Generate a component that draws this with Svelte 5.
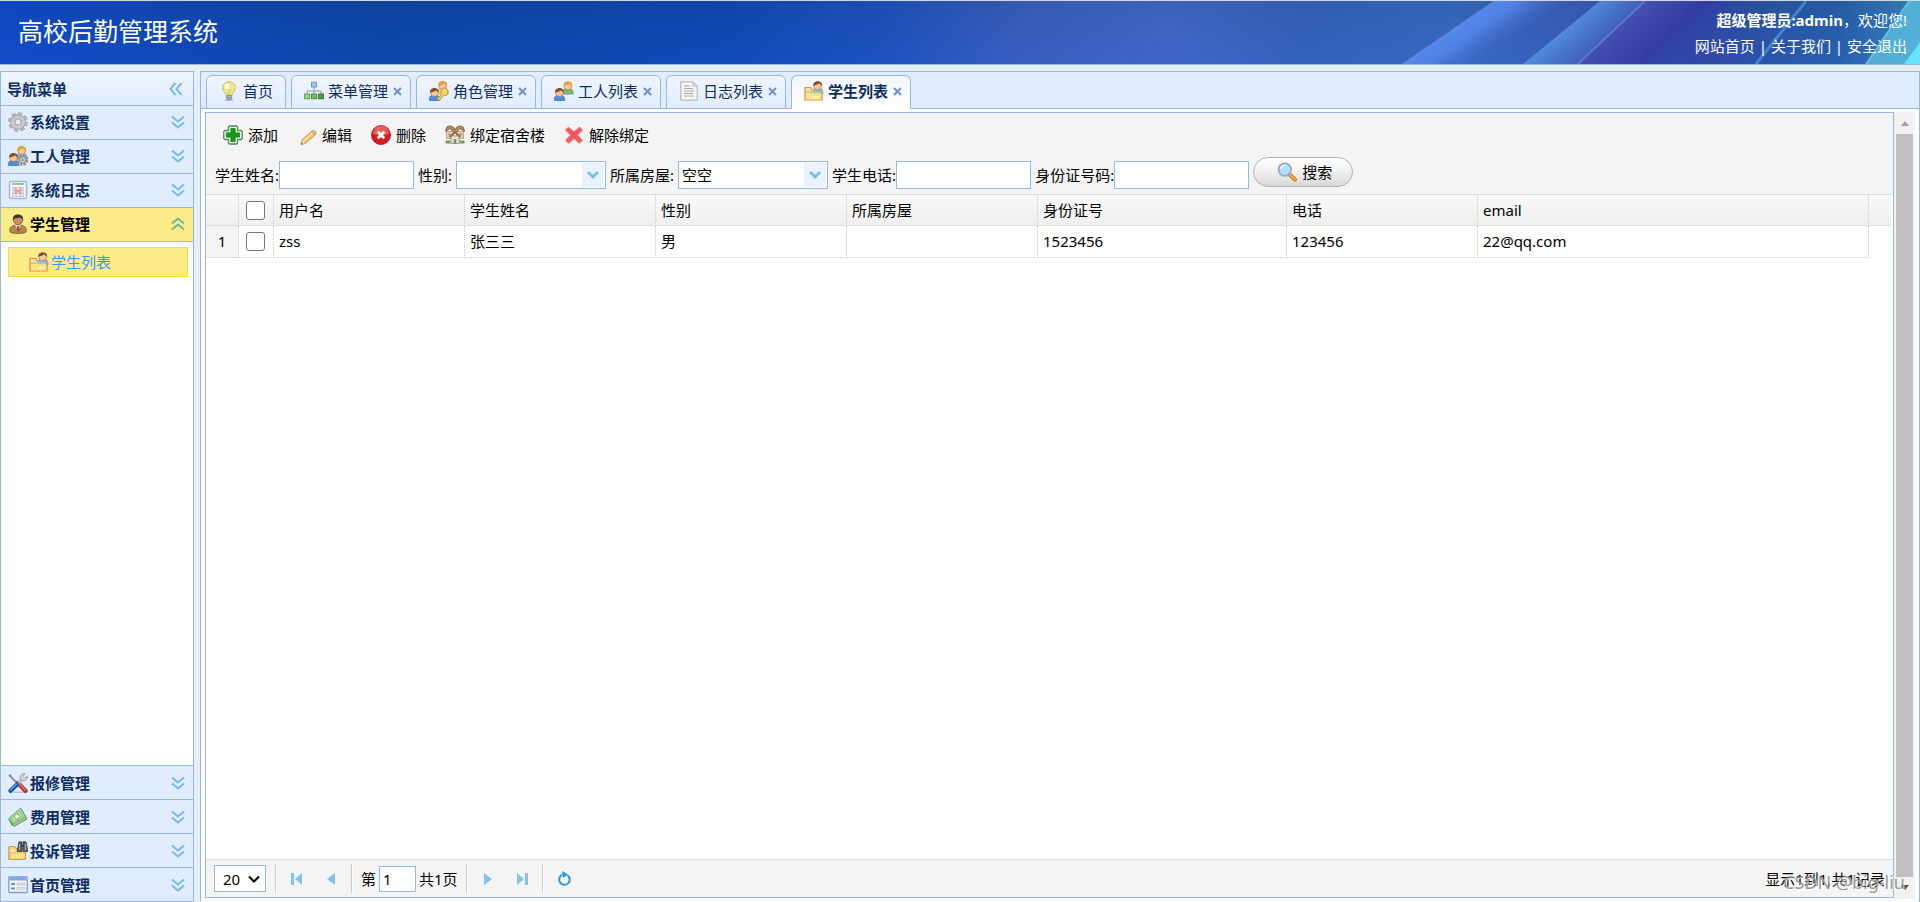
<script lang="ts">
	type MenuItem = { title: string; icon: string };

	const menuTop: MenuItem[] = [
		{ title: '系统设置', icon: 'gear' },
		{ title: '工人管理', icon: 'worker' },
		{ title: '系统日志', icon: 'log' },
		{ title: '学生管理', icon: 'student' }
	];
	const menuBottom: MenuItem[] = [
		{ title: '报修管理', icon: 'tools' },
		{ title: '费用管理', icon: 'money' },
		{ title: '投诉管理', icon: 'search-folder' },
		{ title: '首页管理', icon: 'form' }
	];
	const tabs = [
		{ title: '首页', icon: 'bulb', closable: false },
		{ title: '菜单管理', icon: 'tree', closable: true },
		{ title: '角色管理', icon: 'role', closable: true },
		{ title: '工人列表', icon: 'users', closable: true },
		{ title: '日志列表', icon: 'page', closable: true },
		{ title: '学生列表', icon: 'user-folder', closable: true }
	];
	const tools = [
		{ title: '添加', icon: 'add' },
		{ title: '编辑', icon: 'pencil' },
		{ title: '删除', icon: 'delete' },
		{ title: '绑定宿舍楼', icon: 'house' },
		{ title: '解除绑定', icon: 'cross' }
	];
	const rows = [
		{ username: 'zss', name: '张三三', sex: '男', house: '', card: '1523456', phone: '123456', email: '22@qq.com' }
	];

	let openMenu = $state('学生管理');
	let activeTab = $state('学生列表');
	let checked = $state(rows.map(() => false));
	let house = $state('空空');
	let sex = $state('');
	let page = $state('1');

	function checkAll(e: Event) {
		const on = (e.currentTarget as HTMLInputElement).checked;
		checked = rows.map(() => on);
	}
</script>

{#snippet person(x: number, y: number, hair: string, shirt: string)}
	<g transform="translate({x} {y})">
		<path d="M-.3 12.600c0-4.500 2-5.600 5.500-5.600s5.500 1.100 5.500 5.600c-2 .6-9 .6-11 0z" fill={shirt} stroke="#00000044" stroke-width=".6" />
		<circle cx="5.200" cy="4.600" r="3.900" fill="#f5c79a" stroke="#9a6432" stroke-width=".5" />
		<path d="M.8 4.800C.5 1.500 2.700 0 5.200 0s4.700 1.500 4.400 4.800C8.300 3.800 7.500 3 6.800 2.400 5.200 3.600 3 3.600.8 4.800z" fill={hair} />
	</g>
{/snippet}

{#snippet icon(name: string)}
	<svg class="icon" viewBox="0 0 20 20" aria-hidden="true">
		{#if name === 'gear'}
			<circle cx="10" cy="10" r="8" fill="none" stroke="#8e8e8e" stroke-width="3.600" stroke-dasharray="3.600 2.680" />
			<circle cx="10" cy="10" r="8" fill="none" stroke="#c4c4c4" stroke-width="2.400" stroke-dasharray="3 3.280" stroke-dashoffset="-.3" />
			<circle cx="10" cy="10" r="5.400" fill="none" stroke="#959595" stroke-width="4.800" />
			<circle cx="10" cy="10" r="5.200" fill="none" stroke="#c9c9c9" stroke-width="3.800" />
			<circle cx="10" cy="10" r="3" fill="#e6eaf0" stroke="#999" stroke-width=".7" />
		{:else if name === 'worker'}
			{@render person(8.500, 0, '#e3a32e', '#9cb6cf')}
			{@render person(.3, 7, '#8a5028', '#4c8fe0')}
			<circle cx="14.500" cy="14" r="4" fill="none" stroke="#8a8f8a" stroke-width="3.500" stroke-dasharray="2.200 .94" />
			<circle cx="14.500" cy="14" r="3" fill="#d9dcd6" stroke="#8c918a" stroke-width="1" />
			<circle cx="14.500" cy="14" r="1.200" fill="#7f8a80" />
		{:else if name === 'log'}
			<rect x="1.500" y="1.500" width="17" height="17" rx="1.500" fill="#f4f8fd" stroke="#9db9df" stroke-width="1.500" />
			<path d="M4 4h12" stroke="#79b66b" stroke-width="1.500" />
			<path d="M4 7.500h12M4 10.500h12M4 13.500h12M4 16.300h12M5 7v10M8.300 7v10M11.700 7v10M15 7v10" stroke="#b7c3d8" stroke-width=".9" />
			<path d="M6.500 7.500h2v2h3v-2h2v7h-2v-2h-3v2h-2z" fill="#f29a9a" />
		{:else if name === 'student'}
			<path d="M2 18c-1-5 2-7 8-7s9 2 8 7c-3 2-13 2-16 0z" fill="#b08a4a" stroke="#74572c" stroke-width=".8" />
			<path d="M7 11h6l-3 6z" fill="#e9dcc0" />
			<path d="M9.200 12h1.800l1 4-1.600 2-1.600-2z" fill="#b8454b" />
			<circle cx="10" cy="6" r="4.600" fill="#c98f62" stroke="#5e3a22" stroke-width=".6" />
			<path d="M4.800 6.500C4.500 2 7 .5 10 .5S15.500 2 15.200 6.500C14.200 5 13.500 4 12 3.600 9.500 4.500 6 4 4.800 6.500z" fill="#3c322e" />
		{:else if name === 'tools'}
			<path d="M5 19.200h13" stroke="#9fb2cc" stroke-width="1" />
			<path d="M1 2l7.500 7.500" stroke="#8f959c" stroke-width="2" />
			<path d="M.8.800l2.800 1.600-1 1.400z" fill="#777" />
			<path d="M10 10l7.500 8" stroke="#b83233" stroke-width="4.400" stroke-linecap="round" />
			<path d="M10.500 10l6.500 7" stroke="#e8706a" stroke-width="1.500" stroke-linecap="round" />
			<path d="M14 6.500L9.500 11" stroke="#b6bcc4" stroke-width="3" />
			<path d="M12 5.200c0-3 2-5 5-4.500l-2.200 2.600 1.800 1.900 2.700-2c.5 3-1.600 5-4.300 4.600z" fill="#d6dade" stroke="#8d949c" stroke-width=".8" />
			<path d="M9 11.500L2.600 17.800" stroke="#1d57b4" stroke-width="4.400" stroke-linecap="round" />
			<path d="M8.400 11.200l-5.500 5.300" stroke="#5e9cf0" stroke-width="1.400" stroke-linecap="round" />
		{:else if name === 'money'}
			<path d="M1 12L13 1.500l6 10.500L6 19.500z" fill="#9fca8e" stroke="#5e9b57" stroke-width="1" />
			<path d="M1 12l3.500 6.500" stroke="#4c8c49" stroke-width="1.400" />
			<path d="M.8 11.200L12.500 1l5 9L5 17.300z" fill="#b7dba6" stroke="#66a460" stroke-width=".8" />
			<path d="M3 11.500l9-7.800 3.300 6-9.600 5.500z" fill="none" stroke="#7db873" stroke-width=".8" />
			<circle cx="9" cy="9.500" r="2.600" fill="#e3f2d9" stroke="#66a460" stroke-width=".7" />
		{:else if name === 'search-folder'}
			<path d="M.8 18.500V5.500h6l1.500 2h9.200v11z" fill="#f7d277" stroke="#cf9332" />
			<path d="M2.500 9.500h4" stroke="#fff" stroke-width="1.500" />
			<path d="M3 12h14v6H2z" fill="#fbe38f" stroke="#e5b14e" stroke-width=".7" />
			<path d="M9 10.500L11 .8h3v9.700H9zM20 10.500L18 .8h-3v9.700h5z" fill="#5b5f65" stroke="#2f3237" stroke-width=".7" />
			<path d="M11.500 3v6M17.500 3v6" stroke="#adb3ba" stroke-width="1" />
			<path d="M13 5h3" stroke="#2f3237" stroke-width="1.500" />
		{:else if name === 'form'}
			<rect x=".8" y="2" width="18.400" height="15.500" rx="1" fill="#f3f7fc" stroke="#7f9cc7" stroke-width="1.300" />
			<path d="M1.500 2.500h17v3h-17z" fill="#7ea8e4" />
			<path d="M3 9h4M3 13.500h4" stroke="#5f8fd8" stroke-width="1.800" />
			<path d="M9 8h8v2.200H9zM9 12.500h8v2.200H9z" fill="#dfe3e8" stroke="#b3bac4" stroke-width=".6" />
		{:else if name === 'bulb'}
			<path d="M10 .8c4 0 6.300 2.800 6.300 5.900 0 3.500-3.200 4.800-3.500 8H7.200c-.3-3.200-3.500-4.500-3.500-8C3.700 3.600 6 .8 10 .8z" fill="#efe98a" stroke="#b9b460" stroke-width=".9" />
			<ellipse cx="8" cy="5.500" rx="2.300" ry="3" fill="#fdfde2" />
			<path d="M9 8l.5 6M11.500 8l-.6 6" stroke="#c9bd4e" stroke-width=".7" />
			<rect x="7.300" y="14.500" width="5.400" height="4" rx=".8" fill="#b5b8ba" stroke="#7e8388" stroke-width=".7" />
			<path d="M7.500 16.500h5" stroke="#71767b" stroke-width=".7" />
			<ellipse cx="10" cy="19.200" rx="5" ry=".7" fill="#00000033" />
		{:else if name === 'tree'}
			<path d="M10 6v4M3 13v-3h14v3M10 10v3" fill="none" stroke="#8e979f" stroke-width="1" />
			<rect x="7.500" y="1.300" width="5" height="4.700" fill="#9fc5f3" stroke="#6a97d3" />
			<rect x=".6" y="13" width="5" height="4.700" fill="#9bd184" stroke="#5c9e4b" />
			<rect x="7.500" y="13" width="5" height="4.700" fill="#74bd5e" stroke="#468f38" />
			<rect x="14.400" y="13" width="5" height="4.700" fill="#4f9d45" stroke="#2f7a2a" />
		{:else if name === 'role'}
			{@render person(8.500, 0, '#e3a32e', '#f2d58d')}
			{@render person(.3, 7, '#8a5028', '#4c8fe0')}
			<path d="M19 11a3.600 3.600 0 0 1-4.800 3.600L10.500 19l-2 .4.200-2.200 4-4.200A3.600 3.600 0 1 1 19 11z" fill="#f7d36c" stroke="#c08a2c" stroke-width=".9" />
		{:else if name === 'users'}
			{@render person(8.700, .3, '#e3a32e', '#78b96c')}
			{@render person(.3, 7, '#8a5028', '#4c8fe0')}
		{:else if name === 'page'}
			<path d="M1.800.800h12l4.400 4.400v14H1.800z" fill="#f6f6f6" stroke="#b9b9b9" stroke-width="1.200" />
			<path d="M13.800.800v4.400h4.400z" fill="#d8d8d8" stroke="#b9b9b9" stroke-width=".7" />
			<path d="M5 5h6M5 7.500h9M5 10h10M5 12.500h9M5 15h10" stroke="#a9a9a9" stroke-width="1.100" />
		{:else if name === 'user-folder'}
			{@render person(8.500, .2, '#8a4b22', '#8db4e8')}
			<path d="M1 19V6.500h6L8 9h10v10z" fill="#f9e3a0" stroke="#d9903b" stroke-width="1.200" />
			<path d="M9 9.300c1-1.500 8-1.500 9.800 1.500l-1 1.700H9z" fill="#8db4e8" />
			<path d="M2 10.500h14v1.500H2z" fill="#a9cfa3" />
			<path d="M2 12.500h15v5.900H2z" fill="#fbe582" />
			<path d="M9 15l7 .5-6 1.500z" fill="#fff6c9" />
		{:else if name === 'add'}
			<path d="M6.500 1h7l1 1v3.500h3.500l1.200 1v7l-1.200 1h-3.500v3.500l-1 1h-7l-1-1v-3.500H2l-1.200-1v-7L2 5.500h3.500V2z" fill="#f6fbf5" stroke="#4d8a55" stroke-width="1.300" />
			<path d="M7.800 3.300h4.400v4.500h4.500v4.400h-4.500v4.500H7.800v-4.500H3.300V7.800h4.500z" fill="#119a17" stroke="#0b7a10" stroke-width=".6" />
		{:else if name === 'pencil'}
			<path d="M4 19.400l1-4.600L14.800 6.200l3.600 3.300L8.600 18.300z" fill="#f5c66b" stroke="#c58a33" stroke-width=".9" />
			<path d="M6.500 16L16 7.800" stroke="#fde6ae" stroke-width="1.500" />
			<path d="M14.500 6.500l1.500-1c1.600-.6 3.600 1.200 3.200 2.800l-1.200 1.500z" fill="#f0b39a" stroke="#b98268" stroke-width=".6" />
			<path d="M4 19.400l1-4.600 3.600 3.500z" fill="#e9cfa0" />
			<path d="M4 19.400l.4-2 1.500 1.500z" fill="#444" />
		{:else if name === 'delete'}
			<circle cx="10" cy="10" r="9.500" fill="#d81a22" stroke="#a80f18" stroke-width=".8" />
			<path d="M2 8.500a8 8 0 0 1 16 0c-4 2.500-12 2.500-16 0z" fill="#f0716f" opacity=".75" />
			<path d="M6.800 6.800l6.400 6.400M13.200 6.800l-6.400 6.400" stroke="#fff" stroke-width="2.800" />
		{:else if name === 'house'}
			<path d="M1.500 6.500h7v7h-7z" fill="#e8d3ae" stroke="#8f7a5a" stroke-width=".6" />
			<path d="M11.500 6.500h7v7h-7z" fill="#e8d3ae" stroke="#8f7a5a" stroke-width=".6" />
			<path d="M.3 6.500L2 1.800 5 .8l3.500 1.500L10 5l1.500-2.700L15 .8l3 1 1.700 4.700-4.700-3-5 5-5-5z" fill="#b98a58" stroke="#76573a" stroke-width=".8" />
			<path d="M6 11h8v7.500H6z" fill="#f0e3c8" stroke="#8f7a5a" stroke-width=".7" />
			<path d="M4.500 12L10 7l5.500 5" fill="none" stroke="#9a6b42" stroke-width="1.800" />
			<path d="M8.700 14h2.600v4.500H8.700z" fill="#6e8aa8" />
			<path d="M3.500 8.500h2v2h-2zM14.500 8.500h2v2h-2z" fill="#6e8aa8" />
			<path d="M.5 15.500h5v3h-5zM14.500 15.500h5v3h-5z" fill="#6f9f5c" />
		{:else if name === 'cross'}
			<path d="M4.500 2.500L10 7l5.500-4.500 2.700 2.500L13.200 10l5 5.300-2.800 2.700L10 13.200 4.600 18l-2.800-2.700L6.800 10l-5-5z" fill="#f4555a" stroke="#f4716f" stroke-width="1.200" stroke-linejoin="round" />
		{:else if name === 'search'}
			<path d="M12 12l6 5.500" stroke="#c8791d" stroke-width="4" stroke-linecap="round" />
			<path d="M12 12l5.600 5" stroke="#f4ae4b" stroke-width="2.200" stroke-linecap="round" />
			<circle cx="7.800" cy="7.600" r="6.300" fill="#b5dbfa" stroke="#96a6bd" stroke-width="1.700" />
			<path d="M4 7a4 4 0 0 1 5-3.600" fill="none" stroke="#eff8ff" stroke-width="1.600" />
		{/if}
	</svg>
{/snippet}

{#snippet chevrons(up: boolean)}
	<svg class="chevrons" class:up viewBox="0 0 14 14" aria-hidden="true">
		<path d="M1 1.500l6 5 6-5M1 7.500l6 5 6-5" />
	</svg>
{/snippet}

{#snippet menuHead(item: MenuItem)}
	<button class="menu-head" class:open={openMenu === item.title} onclick={() => (openMenu = item.title)}>
		{@render icon(item.icon)}
		<span>{item.title}</span>
		{@render chevrons(openMenu === item.title)}
	</button>
{/snippet}

{#snippet pageIcon(d: string)}
	<svg class="page-icon" viewBox="0 0 16 16" aria-hidden="true"><path {d} /></svg>
{/snippet}

<div class="app">
	<header>
		<svg class="banner" viewBox="0 0 1920 64" preserveAspectRatio="none" aria-hidden="true">
			<defs>
				<linearGradient id="sky">
					<stop offset="0" stop-color="#124ac6" />
					<stop offset=".1" stop-color="#1248b2" />
					<stop offset=".2" stop-color="#1046a4" />
					<stop offset=".38" stop-color="#1249b2" />
					<stop offset=".46" stop-color="#1f52ba" />
					<stop offset=".53" stop-color="#3b5fba" />
					<stop offset=".61" stop-color="#4469c4" />
					<stop offset=".68" stop-color="#3763b6" />
					<stop offset=".76" stop-color="#386bbd" />
					<stop offset=".83" stop-color="#3c5cb4" />
					<stop offset=".88" stop-color="#3643a4" />
					<stop offset=".91" stop-color="#2d52a4" />
					<stop offset=".96" stop-color="#2a62aa" />
					<stop offset="1" stop-color="#3d86bf" />
				</linearGradient>
				<linearGradient id="beam" gradientUnits="userSpaceOnUse" x1="1449" y1="32" x2="1475" y2="69">
					<stop offset="0" stop-color="#5289ea" />
					<stop offset=".35" stop-color="#4e80e2" />
					<stop offset="1" stop-color="#4461bd" stop-opacity="0" />
				</linearGradient>
				<linearGradient id="beam2" gradientUnits="userSpaceOnUse" x1="1562" y1="32" x2="1584" y2="58">
					<stop offset="0" stop-color="#5a96e2" />
					<stop offset=".4" stop-color="#4c7fd2" />
					<stop offset="1" stop-color="#4565bd" stop-opacity=".8" />
				</linearGradient>
				<linearGradient id="purple" gradientUnits="userSpaceOnUse" x1="1611" y1="32" x2="1668" y2="92">
					<stop offset="0" stop-color="#4650b2" />
					<stop offset=".5" stop-color="#323ca2" />
					<stop offset="1" stop-color="#2a50a4" stop-opacity="0" />
				</linearGradient>
				<linearGradient id="shade" x2="0" y2="1">
					<stop offset="0" stop-color="#003060" stop-opacity=".12" />
					<stop offset="1" stop-color="#1050ff" stop-opacity=".08" />
				</linearGradient>
			</defs>
			<path d="M0 0h1920v64H0z" fill="url(#sky)" />
			<path d="M0 0h1920v64H0z" fill="url(#shade)" />
			<path d="M1495 0h100l-92 64h-100z" fill="url(#beam)" />
			<path d="M1645 0h130l-67 64h-130z" fill="url(#purple)" />
			<path d="M1600 0h45l-67 64h-55z" fill="url(#beam2)" opacity=".8" />
			<path d="M1495 0l-92 64M1645 0l-67 64" stroke="#7488dc" stroke-width="2" opacity=".6" />
			<path d="M1806 0l-50 64" stroke="#5aa4e0" stroke-width="3" opacity=".6" />
			<path d="M1909 0h11v64h-54z" fill="#5fc2e0" opacity=".75" />
			<path d="M1909 0l-43 64" stroke="#7fd6f2" stroke-width="2" opacity=".6" />
			<path d="M1920 42v22h-16z" fill="#66e4fb" />
		</svg>
		<h1>高校后勤管理系统</h1>
		<div class="user">
			<p><strong>超级管理员:admin</strong>，欢迎您!</p>
			<nav><a href="#home">网站首页</a> | <a href="#about">关于我们</a> | <a href="#exit">安全退出</a></nav>
		</div>
	</header>

	<div class="body">
		<aside>
			<div class="aside-title">
				<span>导航菜单</span>
				<button aria-label="折叠">
					<svg class="chevrons left" viewBox="0 0 14 14" aria-hidden="true">
						<path d="M1 1.500l6 5 6-5M1 7.500l6 5 6-5" />
					</svg>
				</button>
			</div>
			{#each menuTop as item}
				{@render menuHead(item)}
			{/each}
			<div class="menu-body">
				<a class="leaf" href="#students">{@render icon('user-folder')}<span>学生列表</span></a>
			</div>
			{#each menuBottom as item}
				{@render menuHead(item)}
			{/each}
		</aside>

		<main>
			<div class="tabs">
				{#each tabs as tab}
					<div class="tab" class:active={tab.title === activeTab} class:fixed={!tab.closable}>
						<button class="tab-link" onclick={() => (activeTab = tab.title)}>
							{@render icon(tab.icon)}<span>{tab.title}</span>
						</button>
						{#if tab.closable}
							<button class="close" aria-label="关闭">
								<svg viewBox="0 0 9 9" aria-hidden="true"><path d="M1 1l7 7M8 1L1 8" /></svg>
							</button>
						{/if}
					</div>
				{/each}
			</div>

			<div class="content">
				<section class="grid">
					<div class="toolbar">
						<div class="tools">
							{#each tools as tool}
								<button>{@render icon(tool.icon)}<span>{tool.title}</span></button>
							{/each}
						</div>
						<form class="search" onsubmit={(e) => e.preventDefault()}>
							<div class="field">
								<label for="s-name">学生姓名:</label>
								<input id="s-name" type="text" />
							</div>
							<div class="field">
								<label for="s-sex">性别:</label>
								<div class="combo">
									<select id="s-sex" bind:value={sex}>
										<option value=""></option>
										<option value="男">男</option>
										<option value="女">女</option>
									</select>
									<svg viewBox="0 0 22 24" aria-hidden="true"><path d="M6 9l5 5 5-5" /></svg>
								</div>
							</div>
							<div class="field">
								<label for="s-house">所属房屋:</label>
								<div class="combo">
									<select id="s-house" bind:value={house}>
										<option value="空空">空空</option>
									</select>
									<svg viewBox="0 0 22 24" aria-hidden="true"><path d="M6 9l5 5 5-5" /></svg>
								</div>
							</div>
							<div class="field">
								<label for="s-phone">学生电话:</label>
								<input id="s-phone" type="text" />
							</div>
							<div class="field">
								<label for="s-card">身份证号码:</label>
								<input id="s-card" type="text" />
							</div>
							<button class="search-btn">{@render icon('search')}<span>搜索</span></button>
						</form>
					</div>

					<div class="table-wrap">
						<table>
							<colgroup>
								<col class="c-num" />
								<col class="c-check" />
								<col class="c-base" />
								<col class="c-base" />
								<col class="c-base" />
								<col class="c-base" />
								<col class="c-card" />
								<col class="c-base" />
								<col />
								<col class="c-gap" />
							</colgroup>
							<thead>
								<tr>
									<th></th>
									<th class="check"><input type="checkbox" aria-label="全选" onchange={checkAll} /></th>
									<th>用户名</th>
									<th>学生姓名</th>
									<th>性别</th>
									<th>所属房屋</th>
									<th>身份证号</th>
									<th>电话</th>
									<th>email</th>
									<th class="gap"></th>
								</tr>
							</thead>
							<tbody>
								{#each rows as row, i}
									<tr>
										<td class="num">{i + 1}</td>
										<td class="check"><input type="checkbox" aria-label={row.username} bind:checked={checked[i]} /></td>
										<td>{row.username}</td>
										<td>{row.name}</td>
										<td>{row.sex}</td>
										<td>{row.house}</td>
										<td>{row.card}</td>
										<td>{row.phone}</td>
										<td>{row.email}</td>
										<td class="gap"></td>
									</tr>
								{/each}
							</tbody>
						</table>
					</div>

					<footer>
						<div class="size">
							<select aria-label="每页条数">
								<option>20</option>
								<option>50</option>
							</select>
							<svg viewBox="0 0 12 12" aria-hidden="true"><path d="M1 3.500l5 5 5-5" /></svg>
						</div>
						<div class="pager-group">
							<button aria-label="首页">{@render pageIcon('M2 2h3v12H2zM13 2v12L6 8z')}</button>
							<button aria-label="上一页">{@render pageIcon('M12 2v12L4 8z')}</button>
						</div>
						<div class="pager-group">
							<label for="page">第</label>
							<input id="page" type="text" bind:value={page} />
							<span>共1页</span>
						</div>
						<div class="pager-group">
							<button aria-label="下一页">{@render pageIcon('M4 2v12l8-6z')}</button>
							<button aria-label="末页">{@render pageIcon('M3 2v12l7-6zM11 2h3v12h-3z')}</button>
						</div>
						<div class="pager-group">
							<button aria-label="刷新">
								<svg class="refresh" viewBox="0 0 16 16" aria-hidden="true">
									<path d="M11.500 4.200A5.300 5.300 0 1 1 6.500 3.600" />
									<path class="head" d="M6 0l6 3.500L7 7z" />
								</svg>
							</button>
						</div>
						<div class="info">显示1到1,共1记录<span class="watermark">CSDN @big-liu</span></div>
					</footer>
				</section>

				<div class="scrollbar" aria-hidden="true">
					<span class="arrow"></span>
					<span class="thumb"></span>
					<span class="arrow down"></span>
				</div>
			</div>
		</main>
	</div>
</div>

<style>
	:global(body) {
		margin: 0;
		background: #e6eef8;
	}

	.app {
		height: 100vh;
		display: flex;
		flex-direction: column;
		overflow: hidden;
		color: #000;
		font: 15px/20px 'Noto Sans', 'Noto Sans CJK SC', sans-serif;
	}

	.app * {
		box-sizing: border-box;
	}

	button,
	input,
	select {
		font: inherit;
		color: inherit;
		margin: 0;
	}

	button {
		display: flex;
		align-items: center;
		padding: 0;
		border: 0;
		background: none;
		cursor: pointer;
	}

	.icon {
		flex: none;
		width: 20px;
		height: 20px;
	}

	header {
		position: relative;
		flex: none;
		display: flex;
		justify-content: space-between;
		align-items: flex-start;
		height: 65px;
		padding: 0 13px 0 18px;
		border-top: 1px solid #d4d8de;
		border-bottom: 1px solid #95b8e7;
		color: #fff;
	}

	.banner {
		position: absolute;
		inset: 0;
		width: 100%;
		height: 100%;
	}

	h1 {
		position: relative;
		margin: 0;
		font-size: 25px;
		line-height: 60px;
		font-weight: 400;
	}

	.user {
		position: relative;
		padding-top: 6px;
		text-align: right;
		line-height: 26px;
	}

	.user p {
		margin: 0;
	}

	.user a {
		color: #fff;
		text-decoration: none;
	}

	.body {
		flex: 1;
		min-height: 0;
		display: grid;
		grid-template-columns: 194px 1fr;
		gap: 6px;
		padding-top: 6px;
	}

	aside {
		display: flex;
		flex-direction: column;
		min-height: 0;
		border: 1px solid #95b8e7;
		border-bottom: 0;
		background: #fff;
		color: #0e2d5f;
		font-weight: 700;
	}

	.aside-title {
		flex: none;
		display: flex;
		align-items: center;
		justify-content: space-between;
		height: 34px;
		padding: 0 10px 0 6px;
		border-bottom: 1px solid #95b8e7;
		background: linear-gradient(#eff5ff, #e0ecff);
	}

	.menu-head {
		flex: none;
		height: 34px;
		padding: 0 8px 1px 7px;
		gap: 2px;
		border-bottom: 1px solid #95b8e7;
		background: #e0ecff;
		color: #0e2d5f;
	}

	.menu-body ~ .menu-head {
		padding-bottom: 0;
	}

	.menu-head.open {
		background: #fbec88;
		color: #000;
	}

	.menu-head .chevrons {
		margin-left: auto;
	}

	.chevrons {
		width: 14px;
		height: 14px;
		fill: none;
		stroke: #78b9ec;
		stroke-width: 2;
	}

	.chevrons.up {
		transform: rotate(180deg);
		stroke: #76b3a6;
	}

	.chevrons.left {
		transform: rotate(90deg);
	}

	.menu-body {
		flex: 1;
		min-height: 0;
		padding: 5px 5px 0 7px;
		border-bottom: 1px solid #95b8e7;
	}

	.leaf {
		display: flex;
		align-items: center;
		gap: 2px;
		height: 30px;
		padding-left: 20px;
		border: 1px solid #fadd32;
		background: #fbec88;
		color: #3399ff;
		font-weight: 400;
		text-decoration: none;
	}

	main {
		display: flex;
		flex-direction: column;
		min-width: 0;
		min-height: 0;
		border: 1px solid #95b8e7;
		border-bottom: 0;
		background: #fff;
	}

	.tabs {
		flex: none;
		display: flex;
		gap: 5px;
		height: 37px;
		padding: 3px 0 0 5px;
		border-bottom: 1px solid #95b8e7;
		background: #e0ecff;
	}

	.tab {
		display: flex;
		align-items: center;
		gap: 5px;
		height: 34px;
		padding: 0 8px 2px 12px;
		border: 1px solid #95b8e7;
		border-radius: 6px 6px 0 0;
		background: linear-gradient(#eff5ff, #e0ecff);
		color: #0e2d5f;
	}

	.tab.fixed {
		padding-right: 12px;
	}

	.tab.active {
		border-bottom-color: #fff;
		background: linear-gradient(#eff5ff, #fff);
		font-weight: 700;
	}

	.tab-link {
		gap: 4px;
	}

	.close svg {
		width: 9px;
		height: 9px;
		stroke: #7091c8;
		stroke-width: 2;
	}

	.content {
		flex: 1;
		min-height: 0;
		display: flex;
		padding: 3px 4px 3px;
	}

	.grid {
		flex: 1;
		min-width: 0;
		display: flex;
		flex-direction: column;
		margin-bottom: 1px;
		border: 1px solid #95b8e7;
	}

	.toolbar {
		flex: none;
		padding: 6px 9px 2px;
		border-bottom: 1px solid #ddd;
		background: #f4f4f4;
	}

	.tools {
		display: flex;
		gap: 19px;
		height: 32px;
		padding-left: 8px;
	}

	.tools button {
		gap: 5px;
	}

	.search {
		display: flex;
		align-items: center;
		gap: 4px;
		height: 41px;
		padding-top: 1px;
	}

	.field {
		display: flex;
		align-items: center;
		padding-top: 5px;
	}

	.field input {
		width: 135px;
		height: 28px;
		padding: 0 4px;
		border: 1px solid #95b8e7;
		background: #fff;
	}

	.combo {
		position: relative;
		margin-left: 4px;
	}

	.combo select {
		display: block;
		width: 150px;
		height: 28px;
		padding: 0 26px 0 3px;
		border: 1px solid #95b8e7;
		border-radius: 0;
		background: #fff;
		appearance: none;
	}

	.combo svg {
		position: absolute;
		top: 2px;
		right: 2px;
		width: 22px;
		height: 24px;
		background: #eaf2ff;
		fill: none;
		stroke: #78bdf2;
		stroke-width: 3;
		pointer-events: none;
	}

	.search-btn {
		gap: 5px;
		width: 100px;
		height: 30px;
		padding-left: 23px;
		border: 1px solid #b4b4b4;
		border-radius: 15px;
		background: linear-gradient(#fff, #f4f4f4 40%, #d8d8d8);
	}

	.table-wrap {
		flex: 1;
		min-height: 0;
		padding-right: 2px;
		background: #fff;
	}

	table {
		width: 100%;
		table-layout: fixed;
		border-collapse: separate;
		border-spacing: 0;
	}

	.c-num {
		width: 33px;
	}

	.c-check {
		width: 35px;
	}

	.c-base {
		width: 191px;
	}

	.c-card {
		width: 249px;
	}

	.c-gap {
		width: 22px;
	}

	th,
	td {
		height: 32px;
		padding: 0 5px 1px;
		border: 0 dotted #ccc;
		border-width: 0 1px 1px 0;
		text-align: left;
		font-weight: 400;
	}

	th {
		height: 31px;
		border-bottom: 1px solid #ddd;
		background: linear-gradient(#f9f9f9, #efefef);
	}

	.num {
		text-align: center;
		background: #f4f4f4;
	}

	.check {
		padding: 0 2px 0 0;
		text-align: center;
	}

	th.gap {
		border-right: 0;
	}

	td.gap {
		border: 0;
	}

	.check input {
		display: block;
		width: 19px;
		height: 19px;
		margin: 0 auto;
		border: 1px solid #767676;
		border-radius: 3px;
		background: #fff;
		appearance: none;
	}

	.check input:checked {
		background: #0075ff;
	}

	footer {
		flex: none;
		display: flex;
		align-items: center;
		height: 38px;
		padding: 0 8px;
		border-top: 1px solid #ddd;
		background: #f4f4f4;
	}

	.size {
		position: relative;
		margin-right: 9px;
	}

	.size select {
		display: block;
		width: 52px;
		height: 27px;
		padding: 0 0 0 8px;
		border: 1px solid #95b8e7;
		border-radius: 0;
		background: #fff;
		appearance: none;
	}

	.size svg {
		position: absolute;
		top: 8px;
		right: 6px;
		width: 12px;
		height: 12px;
		fill: none;
		stroke: #000;
		stroke-width: 2;
		pointer-events: none;
	}

	.pager-group {
		display: flex;
		align-items: center;
		height: 29px;
		padding: 0 8px 0 9px;
		border-left: 1px solid #ccc;
		box-shadow: inset 1px 0 #fff;
	}

	.pager-group button {
		justify-content: center;
		width: 24px;
		height: 24px;
	}

	.pager-group button + button {
		margin-left: 10px;
	}

	.pager-group input {
		width: 37px;
		height: 26px;
		margin: 0 3px;
		padding: 0 3px;
		border: 1px solid #95b8e7;
		background: #fff;
	}

	.page-icon {
		width: 16px;
		height: 16px;
		fill: #84c2ee;
	}

	.refresh {
		width: 16px;
		height: 16px;
		fill: none;
		stroke: #2a9ade;
		stroke-width: 2;
	}

	.refresh .head {
		fill: #2a9ade;
		stroke: none;
	}

	.info {
		position: relative;
		margin-left: auto;
	}

	.watermark {
		position: absolute;
		top: 3px;
		right: -20px;
		font-size: 18px;
		white-space: nowrap;
		color: rgba(120, 120, 120, 0.75);
		text-shadow: 1px 1px rgba(255, 255, 255, 0.7);
		pointer-events: none;
	}

	.scrollbar {
		flex: none;
		display: flex;
		flex-direction: column;
		align-items: center;
		width: 21px;
		padding: 9px 0;
		background: #f1f1f1;
	}

	.arrow {
		border: 4px solid transparent;
		border-top-width: 0;
		border-bottom: 5px solid #a3a3a3;
	}

	.arrow.down {
		border-top: 5px solid #505050;
		border-bottom-width: 0;
	}

	.thumb {
		flex: 1;
		width: 17px;
		margin: 8px 0;
		background: #c1c1c1;
	}
</style>
